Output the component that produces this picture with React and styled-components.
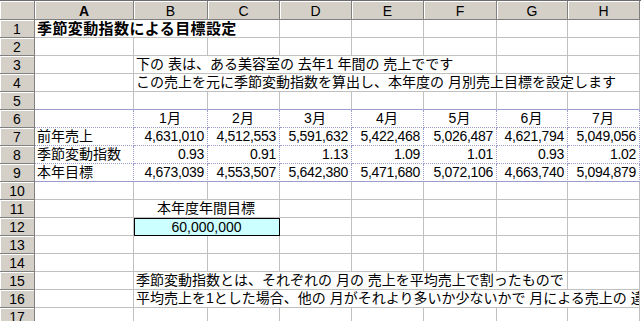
import React from "react";
import styled, { createGlobalStyle } from "styled-components";

const GlobalStyle = createGlobalStyle`
  html, body {
    margin: 0;
    padding: 0;
    background: #fff;
    overflow: hidden;
  }
  body {
    font-family: "Liberation Sans", "Noto Sans CJK JP", sans-serif;
  }
`;

const COLS = [35, 99, 74, 72, 72, 72, 73, 71, 72];
const LETTERS = ["A", "B", "C", "D", "E", "F", "G", "H"];
const GRID = "#c0c0c0";
const FRAME = "#9c9ccc";

const lineFor = (kind) => {
  if (kind === "solid") return `1px solid ${FRAME}`;
  if (kind === "dotted") return `1px dotted ${FRAME}`;
  return `1px solid ${GRID}`;
};

const Sheet = styled.div`
  display: grid;
  grid-template-columns: ${COLS.map((w) => w + "px").join(" ")};
  grid-template-rows: 19px;
  grid-auto-rows: 18px;
  border-top: 1px solid #6c6c6c;
  width: 641px;
  height: 320px;
  overflow: hidden;
  font-size: 14px;
  color: #000;
`;

const Head = styled.div`
  box-sizing: border-box;
  background: #d4d0c8;
  border-right: 1px solid #808080;
  border-bottom: 1px solid #808080;
  box-shadow: inset 1px 1px 0 #fff;
  display: flex;
  align-items: center;
  justify-content: center;
  font-size: 14px;
  font-weight: ${(p) => (p.$active ? 700 : 400)};
  line-height: 1;
  padding-top: 1px;
`;

const Cell = styled.div`
  box-sizing: border-box;
  grid-column: span ${(p) => p.$span || 1};
  border-right: ${(p) => lineFor(p.$right)};
  border-bottom: ${(p) => lineFor(p.$bottom)};
  white-space: nowrap;
  overflow: hidden;
  line-height: 17px;
  padding: 0 3px 0 2px;
  text-align: ${(p) => p.$align || "left"};
  font-size: ${(p) => (p.$title ? "15px" : "14px")};
  font-weight: ${(p) => (p.$title ? 700 : 400)};
  letter-spacing: ${(p) => (p.$num ? "-0.3px" : p.$title ? "0.4px" : "0")};
`;

const GoalCell = styled(Cell)`
  background: #ccffff;
  border: 1px solid #000;
  line-height: 16px;
`;

const prev = ["4,631,010", "4,512,553", "5,591,632", "5,422,468", "5,026,487", "4,621,794", "5,049,056"];
const index = ["0.93", "0.91", "1.13", "1.09", "1.01", "0.93", "1.02"];
const target = ["4,673,039", "4,553,507", "5,642,380", "5,471,680", "5,072,106", "4,663,740", "5,094,879"];
const months = ["1月", "2月", "3月", "4月", "5月", "6月", "7月"];

const num = (list) => list.map((v) => ({ text: v, align: "right", num: true }));

const rows = [
  { cells: [{ span: 3, text: "季節変動指数による目標設定", title: true }] },
  { cells: [] },
  { cells: [{}, { span: 5, text: "下の 表は、ある美容室の 去年1 年間の 売上でです" }] },
  { cells: [{}, { span: 7, text: "この売上を元に季節変動指数を算出し、本年度の 月別売上目標を設定します" }] },
  { cells: [], bottom: "solid" },
  { cells: [{}, ...months.map((m) => ({ text: m, align: "center" }))], bottom: "dotted", right: "dotted" },
  { cells: [{ text: "前年売上" }, ...num(prev)], bottom: "dotted", right: "dotted" },
  { cells: [{ text: "季節変動指数" }, ...num(index)], bottom: "dotted", right: "dotted" },
  { cells: [{ text: "本年目標" }, ...num(target)], bottom: "solid", right: "dotted" },
  { cells: [] },
  { cells: [{}, { span: 2, text: "本年度年間目標", align: "center" }] },
  { cells: [{}, { span: 2, text: "60,000,000", align: "center", goal: true }] },
  { cells: [] },
  { cells: [] },
  { cells: [{}, { span: 6, text: "季節変動指数とは、それぞれの 月の 売上を平均売上で割ったもので" }] },
  { cells: [{}, { span: 7, text: "平均売上を1とした場合、他の 月がそれより多いか少ないかで 月による売上の 違い" }] },
  { cells: [] },
];

const fill = (cells) => {
  const out = [...cells];
  let used = out.reduce((s, c) => s + (c.span || 1), 0);
  while (used < 8) {
    out.push({});
    used += 1;
  }
  return out;
};

export default function App() {
  return (
    <>
      <GlobalStyle />
      <Sheet>
        <Head />
        {LETTERS.map((l) => (
          <Head key={l} $active={l === "A"}>
            {l}
          </Head>
        ))}
        {rows.map((row, r) => (
          <React.Fragment key={r}>
            <Head>{r + 1}</Head>
            {fill(row.cells).map((c, i) => {
              const Comp = c.goal ? GoalCell : Cell;
              return (
                <Comp
                  key={i}
                  $span={c.span}
                  $align={c.align}
                  $title={c.title}
                  $num={c.num}
                  $bottom={row.bottom}
                  $right={row.right}
                >
                  {c.text}
                </Comp>
              );
            })}
          </React.Fragment>
        ))}
      </Sheet>
    </>
  );
}
